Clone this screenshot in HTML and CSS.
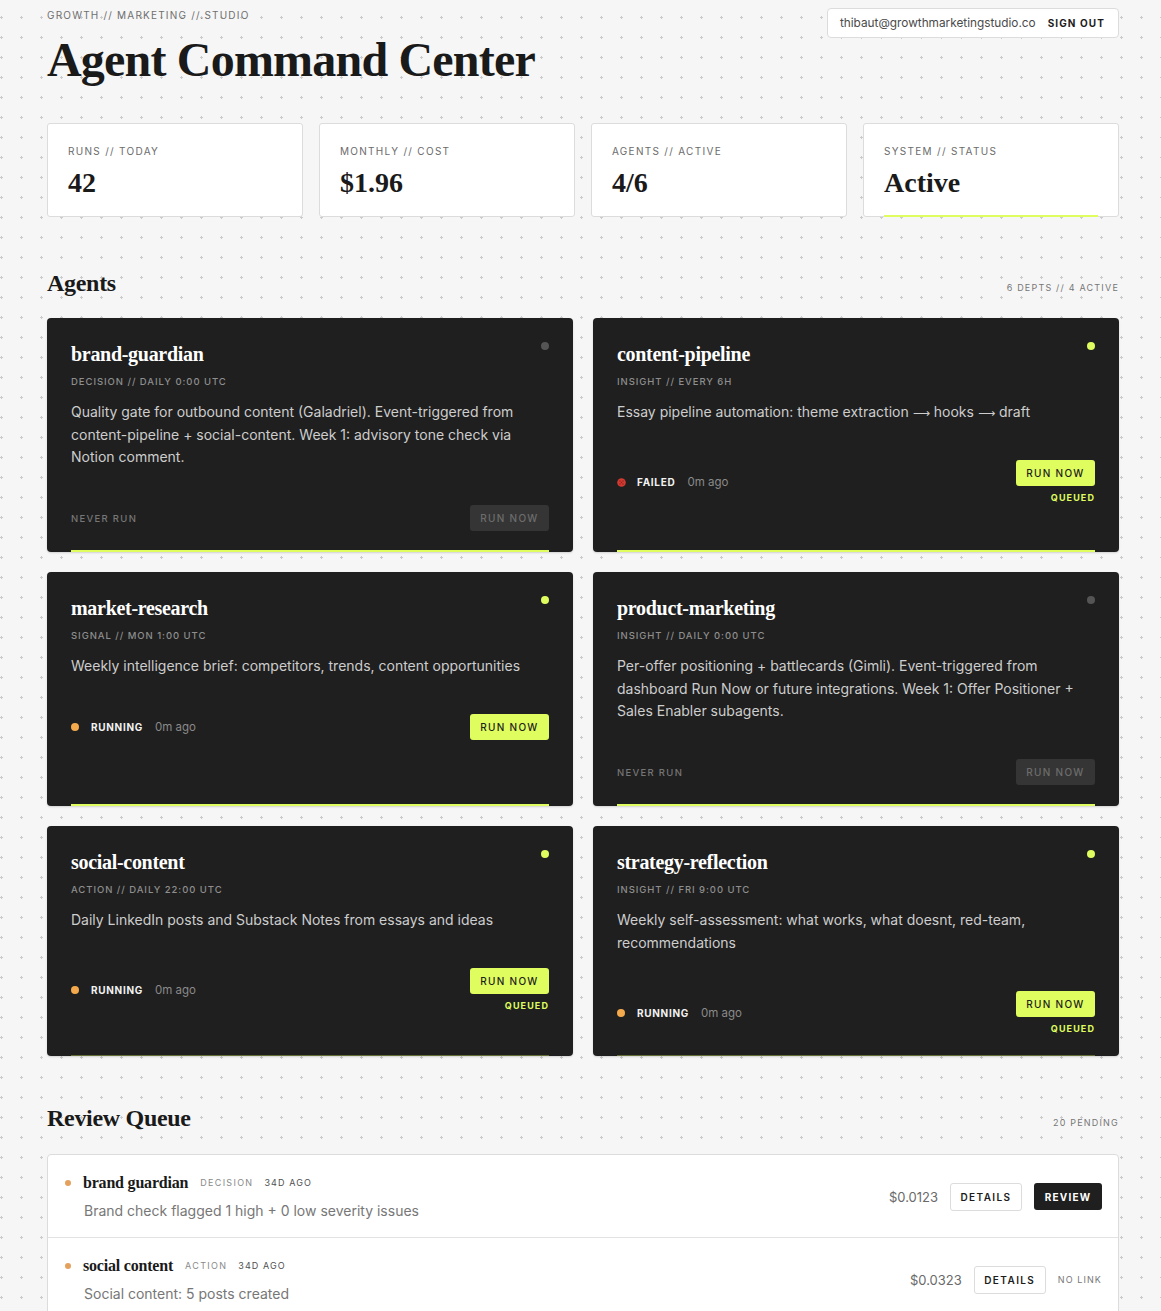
FILE: index.html
```html
<!DOCTYPE html>
<html lang="en">
<head>
<meta charset="utf-8">
<title>Agent Command Center</title>
<link rel="stylesheet" href="styles.css">
</head>
<body>
<div class="page">
  <header class="top">
    <div class="brand-block">
      <div class="brand">GROWTH // MARKETING //.STUDIO</div>
      <h1 class="title">Agent Command Center</h1>
    </div>
    <div class="account">
      <span class="email">thibaut@growthmarketingstudio.co</span>
      <span class="signout">SIGN OUT</span>
    </div>
  </header>

  <section class="stats">
    <div class="stat"><div class="stat-label">RUNS // TODAY</div><div class="stat-value">42</div></div>
    <div class="stat"><div class="stat-label">MONTHLY // COST</div><div class="stat-value">$1.96</div></div>
    <div class="stat"><div class="stat-label">AGENTS // ACTIVE</div><div class="stat-value">4/6</div></div>
    <div class="stat stat-live"><div class="stat-label">SYSTEM // STATUS</div><div class="stat-value">Active</div></div>
  </section>

  <div class="section-head agents-head">
    <h2 class="section-title">Agents</h2>
    <span class="section-meta">6 DEPTS // 4 ACTIVE</span>
  </div>

  <section class="agents">
    <article class="agent">
      <div class="agent-top"><h3 class="agent-name">brand-guardian</h3><span class="pulse off"></span></div>
      <div class="agent-meta">DECISION // DAILY 0:00 UTC</div>
      <p class="agent-desc">Quality gate for outbound content (Galadriel). Event-triggered from content-pipeline + social-content. Week 1: advisory tone check via Notion comment.</p>
      <div class="agent-foot">
        <span class="never">NEVER RUN</span>
        <div class="run-col"><span class="run-btn disabled">RUN NOW</span></div>
      </div>
      <span class="agent-bar"></span>
    </article>

    <article class="agent">
      <div class="agent-top"><h3 class="agent-name">content-pipeline</h3><span class="pulse on"></span></div>
      <div class="agent-meta">INSIGHT // EVERY 6H</div>
      <p class="agent-desc">Essay pipeline automation: theme extraction <span class="arrow">⟶</span> hooks <span class="arrow">⟶</span> draft</p>
      <div class="agent-foot">
        <div class="status">
          <svg class="fail-ico" width="9" height="9" viewBox="0 0 9 9"><circle cx="4.5" cy="4.5" r="4.3" fill="#d23a32"/><circle cx="3" cy="3" r="0.7" fill="#8e1f1a"/><circle cx="6" cy="3" r="0.7" fill="#8e1f1a"/><circle cx="4.5" cy="4.5" r="0.7" fill="#8e1f1a"/><circle cx="3" cy="6" r="0.7" fill="#8e1f1a"/><circle cx="6" cy="6" r="0.7" fill="#8e1f1a"/></svg>
          <span class="status-word">FAILED</span><span class="ago">0m ago</span>
        </div>
        <div class="run-col"><span class="run-btn">RUN NOW</span><span class="queued">QUEUED</span></div>
      </div>
      <span class="agent-bar"></span>
    </article>

    <article class="agent">
      <div class="agent-top"><h3 class="agent-name">market-research</h3><span class="pulse on"></span></div>
      <div class="agent-meta">SIGNAL // MON 1:00 UTC</div>
      <p class="agent-desc">Weekly intelligence brief: competitors, trends, content opportunities</p>
      <div class="agent-foot">
        <div class="status"><span class="dot-run"></span><span class="status-word">RUNNING</span><span class="ago">0m ago</span></div>
        <div class="run-col"><span class="run-btn">RUN NOW</span></div>
      </div>
      <span class="agent-bar"></span>
    </article>

    <article class="agent">
      <div class="agent-top"><h3 class="agent-name">product-marketing</h3><span class="pulse off"></span></div>
      <div class="agent-meta">INSIGHT // DAILY 0:00 UTC</div>
      <p class="agent-desc">Per-offer positioning + battlecards (Gimli). Event-triggered from dashboard Run Now or future integrations. Week 1: Offer Positioner + Sales Enabler subagents.</p>
      <div class="agent-foot">
        <span class="never">NEVER RUN</span>
        <div class="run-col"><span class="run-btn disabled">RUN NOW</span></div>
      </div>
      <span class="agent-bar"></span>
    </article>

    <article class="agent">
      <div class="agent-top"><h3 class="agent-name">social-content</h3><span class="pulse on"></span></div>
      <div class="agent-meta">ACTION // DAILY 22:00 UTC</div>
      <p class="agent-desc">Daily LinkedIn posts and Substack Notes from essays and ideas</p>
      <div class="agent-foot">
        <div class="status"><span class="dot-run"></span><span class="status-word">RUNNING</span><span class="ago">0m ago</span></div>
        <div class="run-col"><span class="run-btn">RUN NOW</span><span class="queued">QUEUED</span></div>
      </div>
      <span class="agent-bar faint"></span>
    </article>

    <article class="agent">
      <div class="agent-top"><h3 class="agent-name">strategy-reflection</h3><span class="pulse on"></span></div>
      <div class="agent-meta">INSIGHT // FRI 9:00 UTC</div>
      <p class="agent-desc">Weekly self-assessment: what works, what doesnt, red-team, recommendations</p>
      <div class="agent-foot">
        <div class="status"><span class="dot-run"></span><span class="status-word">RUNNING</span><span class="ago">0m ago</span></div>
        <div class="run-col"><span class="run-btn">RUN NOW</span><span class="queued">QUEUED</span></div>
      </div>
      <span class="agent-bar faint"></span>
    </article>
  </section>

  <div class="section-head review-head">
    <h2 class="section-title">Review Queue</h2>
    <span class="section-meta">20 PENDING</span>
  </div>

  <section class="queue">
    <div class="q-row">
      <div class="q-main">
        <div class="q-line"><span class="q-dot"></span><span class="q-name">brand guardian</span><span class="q-tag">DECISION</span><span class="q-age">34D AGO</span></div>
        <div class="q-desc">Brand check flagged 1 high + 0 low severity issues</div>
      </div>
      <div class="q-actions">
        <span class="q-cost">$0.0123</span>
        <span class="btn-outline">DETAILS</span>
        <span class="btn-dark">REVIEW</span>
      </div>
    </div>
    <div class="q-row">
      <div class="q-main">
        <div class="q-line"><span class="q-dot"></span><span class="q-name">social content</span><span class="q-tag">ACTION</span><span class="q-age">34D AGO</span></div>
        <div class="q-desc">Social content: 5 posts created</div>
      </div>
      <div class="q-actions">
        <span class="q-cost">$0.0323</span>
        <span class="btn-outline">DETAILS</span>
        <span class="no-link">NO LINK</span>
      </div>
    </div>
  </section>
</div>
</body>
</html>
```

FILE: styles.css
```css
* { box-sizing: border-box; }

html, body {
  margin: 0;
  padding: 0;
}

body {
  background-color: #f6f6f6;
  background-image: radial-gradient(circle at 1.5px 1.5px, #cbcbcb 1.1px, transparent 1.4px);
  background-size: 20px 20px;
  background-position: 0 16px;
  font-family: Inter, "Noto Sans", sans-serif;
  color: #1c1c1c;
  min-height: 1311px;
}

.page {
  width: 1072px;
  margin-left: 47px;
  padding-top: 8px;
}

/* header */
.top {
  display: flex;
  justify-content: space-between;
  align-items: flex-start;
}

.brand {
  font-size: 10px;
  line-height: 14px;
  letter-spacing: 1.2px;
  color: #6f6f6f;
}

.title {
  margin: 10px 0 0;
  font-family: "Liberation Serif", "DejaVu Serif", serif;
  font-weight: 700;
  font-size: 48px;
  line-height: 56px;
  letter-spacing: -0.8px;
  color: #1a1a1a;
}

.account {
  display: flex;
  align-items: center;
  gap: 12px;
  height: 30px;
  padding: 0 13px 0 12px;
  background: #fff;
  border: 1px solid #dcdcdc;
  border-radius: 4px;
}

.email {
  font-size: 11.8px;
  color: #4a4a4a;
}

.signout {
  font-size: 10px;
  font-weight: 700;
  letter-spacing: 1.1px;
  color: #1c1c1c;
}

/* stats */
.stats {
  display: grid;
  grid-template-columns: repeat(4, 1fr);
  gap: 16px;
  margin-top: 35px;
}

.stat {
  position: relative;
  height: 94px;
  background: #fff;
  border: 1px solid #dcdcdc;
  border-radius: 3px;
  padding: 20px 20px 0;
}

.stat-label {
  font-size: 10px;
  line-height: 14px;
  letter-spacing: 1.3px;
  color: #6b6b6b;
}

.stat-value {
  margin-top: 9px;
  font-family: "Liberation Serif", "DejaVu Serif", serif;
  font-weight: 700;
  font-size: 28px;
  line-height: 32px;
  color: #1a1a1a;
}

.stat-live::after {
  content: "";
  position: absolute;
  left: 20px;
  right: 20px;
  bottom: -1px;
  height: 2px;
  background: #dffd5e;
}

/* section heads */
.section-head {
  display: flex;
  justify-content: space-between;
  align-items: baseline;
}

.agents-head { margin-top: 51px; }
.review-head { margin-top: 47px; }

.section-title {
  margin: 0;
  font-family: "Liberation Serif", "DejaVu Serif", serif;
  font-weight: 700;
  font-size: 24px;
  line-height: 30px;
  letter-spacing: -0.3px;
  color: #1a1a1a;
}

.section-meta {
  font-size: 9px;
  letter-spacing: 1.2px;
  color: #777;
}

/* agents */
.agents {
  display: grid;
  grid-template-columns: 1fr 1fr;
  gap: 20px;
  margin-top: 20px;
}

.agent {
  position: relative;
  background: #1f1f1f;
  border-radius: 4px;
  padding: 24px 24px 21px;
  box-shadow: 0 1px 2px rgba(0,0,0,0.15);
}

.agent-top {
  display: flex;
  justify-content: space-between;
  align-items: flex-start;
}

.agent-name {
  margin: 0;
  font-family: "Liberation Serif", "DejaVu Serif", serif;
  font-weight: 700;
  font-size: 20px;
  line-height: 24px;
  letter-spacing: -0.3px;
  color: #fff;
}

.pulse {
  width: 8px;
  height: 8px;
  border-radius: 50%;
}
.pulse.on { background: #dffd5e; }
.pulse.off { background: #555; }

.agent-meta {
  margin-top: 9px;
  font-size: 9.5px;
  font-weight: 500;
  line-height: 14px;
  letter-spacing: 0.95px;
  color: #8e8e8e;
}

.agent-desc {
  margin: 12px 0 0;
  font-size: 14px;
  line-height: 22.5px;
  color: #cdcdcd;
}

.arrow {
  font-family: "DejaVu Sans", sans-serif;
  font-size: 12px;
  line-height: 0;
}

.agent-foot {
  display: flex;
  justify-content: space-between;
  align-items: center;
  margin-top: 36.5px;
}

.never {
  font-size: 9.5px;
  font-weight: 500;
  letter-spacing: 1.3px;
  color: #767676;
}

.status {
  display: flex;
  align-items: center;
}

.fail-ico { display: block; margin-right: 11px; }

.dot-run {
  width: 8px;
  height: 8px;
  border-radius: 50%;
  background: #f4aa4c;
  margin-right: 12px;
}

.status-word {
  font-size: 10px;
  font-weight: 700;
  letter-spacing: 0.7px;
  color: #f2f2f2;
  margin-right: 12px;
}

.ago {
  font-size: 11.5px;
  color: #8a8a8a;
}

.run-col {
  display: flex;
  flex-direction: column;
  align-items: flex-end;
}

.run-btn {
  display: flex;
  align-items: center;
  justify-content: center;
  height: 26px;
  width: 79px;
  border-radius: 3px;
  background: #dffd5e;
  color: #1f1f1f;
  font-size: 10px;
  font-weight: 500;
  letter-spacing: 1.3px;
}

.run-btn.disabled {
  background: #353535;
  color: #6c6c6c;
}

.queued {
  margin-top: 6px;
  font-size: 9px;
  line-height: 12px;
  font-weight: 700;
  letter-spacing: 1.1px;
  color: #dffd5e;
}

.agent-bar {
  position: absolute;
  left: 24px;
  right: 24px;
  bottom: 0;
  height: 2px;
  background: #dffd5e;
}

.agent-bar.faint {
  height: 1px;
  opacity: 0.35;
}

/* queue */
.queue {
  margin-top: 21px;
  background: #fff;
  border: 1px solid #dcdcdc;
  border-radius: 4px;
}

.q-row {
  display: flex;
  justify-content: space-between;
  align-items: center;
  padding: 18px 16px 16px 17px;
  border-bottom: 1px solid #e2e2e2;
}

.q-line {
  display: flex;
  align-items: center;
  height: 20px;
}

.q-dot {
  width: 6px;
  height: 6px;
  border-radius: 50%;
  background: #e4a15e;
  margin-right: 12px;
}

.q-name {
  font-family: "Liberation Serif", "DejaVu Serif", serif;
  font-weight: 700;
  font-size: 16px;
  letter-spacing: -0.2px;
  color: #1a1a1a;
  margin-right: 12px;
}

.q-tag {
  font-size: 9px;
  letter-spacing: 1.3px;
  color: #8a8a8a;
  margin-right: 11px;
}

.q-age {
  font-size: 9px;
  letter-spacing: 1.1px;
  color: #4f4f4f;
}

.q-desc {
  margin: 8px 0 0 19px;
  font-size: 14px;
  line-height: 20px;
  color: #777;
}

.q-actions {
  display: flex;
  align-items: center;
  gap: 12px;
}

.q-cost {
  font-size: 13px;
  color: #6a6a6a;
}

.btn-outline {
  display: flex;
  align-items: center;
  justify-content: center;
  width: 72px;
  height: 28px;
  border: 1px solid #dcdcdc;
  border-radius: 3px;
  font-size: 10px;
  font-weight: 600;
  letter-spacing: 1.4px;
  color: #1c1c1c;
  background: #fff;
}

.btn-dark {
  display: flex;
  align-items: center;
  justify-content: center;
  width: 68px;
  height: 27px;
  border-radius: 3px;
  background: #1f1f1f;
  font-size: 10px;
  font-weight: 700;
  letter-spacing: 1.2px;
  color: #fff;
}

.no-link {
  font-size: 9px;
  letter-spacing: 1.1px;
  color: #777;
  white-space: nowrap;
}
```
